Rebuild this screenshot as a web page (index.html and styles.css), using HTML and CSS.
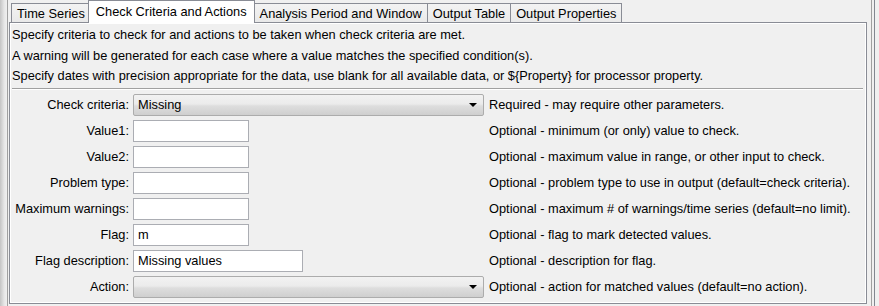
FILE: index.html
```html
<!DOCTYPE html>
<html lang="en">
<head>
    <meta charset="UTF-8">
    <title>Check Criteria and Actions</title>
    <link rel="stylesheet" href="styles.css">
</head>
<body>
    <div class="frame">
        <div class="left-edge"></div>
        <div class="main">
            <div class="tabs">
                <div class="tab">Time Series</div>
                <div class="tab selected">Check Criteria and Actions</div>
                <div class="tab">Analysis Period and Window</div>
                <div class="tab">Output Table</div>
                <div class="tab">Output Properties</div>
            </div>
            <div class="panel">
                <div class="notes">
                    <p>Specify criteria to check for and actions to be taken when check criteria are met.</p>
                    <p>A warning will be generated for each case where a value matches the specified condition(s).</p>
                    <p>Specify dates with precision appropriate for the data, use blank for all available data, or ${Property} for processor property.</p>
                </div>
                <div class="sep"></div>
                <div class="form">
                    <label>Check criteria:</label>
                    <div class="combo"><span>Missing</span><i class="arrow"></i></div>
                    <span class="desc">Required - may require other parameters.</span>

                    <label>Value1:</label>
                    <div class="field"></div>
                    <span class="desc">Optional - minimum (or only) value to check.</span>

                    <label>Value2:</label>
                    <div class="field"></div>
                    <span class="desc">Optional - maximum value in range, or other input to check.</span>

                    <label>Problem type:</label>
                    <div class="field"></div>
                    <span class="desc">Optional - problem type to use in output (default=check criteria).</span>

                    <label>Maximum warnings:</label>
                    <div class="field"></div>
                    <span class="desc">Optional - maximum # of warnings/time series (default=no limit).</span>

                    <label>Flag:</label>
                    <div class="field">m</div>
                    <span class="desc">Optional - flag to mark detected values.</span>

                    <label>Flag description:</label>
                    <div class="field wide">Missing values</div>
                    <span class="desc">Optional - description for flag.</span>

                    <label>Action:</label>
                    <div class="combo"><span></span><i class="arrow"></i></div>
                    <span class="desc">Optional - action for matched values (default=no action).</span>
                </div>
            </div>
        </div>
        <div class="right-edge"></div>
    </div>
</body>
</html>
```

FILE: styles.css
```css
body {
    margin: 0;
    width: 879px;
    height: 306px;
    overflow: hidden;
    background: #f0f0f0;
    font-family: "Liberation Sans", Arial, sans-serif;
    font-size: 12.8px;
    color: #000;
}
.frame {
    display: flex;
    height: 306px;
}
.left-edge {
    width: 7px;
    background: linear-gradient(to right, #c4c4c4, #e6e6e6 60%, #f0f0f0);
    border-right: 1px solid #a0a0a0;
}
.main {
    width: 858px;
    padding: 0 4px 0 1px;
}
.right-edge {
    width: 2px;
    border-left: 1px solid #a0a0a0;
    border-right: 1px solid #828790;
}
.tabs {
    display: flex;
    align-items: flex-end;
    height: 22px;
    padding-left: 2px;
}
.tab {
    height: 18px;
    line-height: 19px;
    padding: 0 5px;
    border: 1px solid #898c95;
    border-bottom: none;
    margin-right: -1px;
    background: linear-gradient(#f3f3f3, #e9e9e9);
    white-space: nowrap;
}
.tab.selected {
    position: relative;
    height: 22px;
    line-height: 21px;
    margin: 0 -1px -1px -2px;
    padding: 0 7px;
    background: #fff;
    z-index: 1;
}
.panel {
    border: 1px solid #898c95;
    box-shadow: inset 1px 1px 0 #fff, inset -1px -1px 0 #fff;
    height: 278px;
    padding: 2px 3px 0 2px;
}
.notes p {
    margin: 0;
    line-height: 20.5px;
    white-space: nowrap;
}
.sep {
    height: 1px;
    background: #a0a0a0;
    border-bottom: 1px solid #fff;
    margin: 1px 0 4px 0;
}
.form {
    display: grid;
    grid-template-columns: 117px 351px auto;
    grid-auto-rows: 22px;
    column-gap: 4px;
    row-gap: 4px;
    align-items: center;
}
.form label {
    text-align: right;
    white-space: nowrap;
}
.desc {
    margin-left: 1px;
    white-space: nowrap;
}
.field {
    height: 20px;
    line-height: 20px;
    padding: 0 0 0 4px;
    background: #fff;
    border: 1px solid #abadb3;
    width: 110px;
}
.field.wide {
    width: 164px;
}
.combo {
    display: flex;
    align-items: center;
    justify-content: space-between;
    height: 20px;
    padding: 0 6px 0 4px;
    border: 1px solid #acacac;
    border-radius: 2px;
    background: linear-gradient(#f2f2f2, #ebebeb 45%, #dddddd 55%, #cfcfcf);
}
.arrow {
    width: 0;
    height: 0;
    border-left: 4px solid transparent;
    border-right: 4px solid transparent;
    border-top: 4px solid #000;
}
```
